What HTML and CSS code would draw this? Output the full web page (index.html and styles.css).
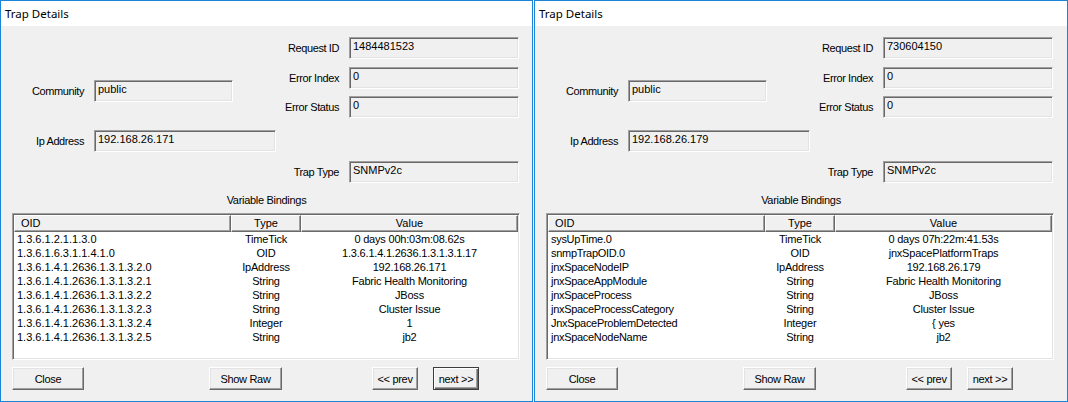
FILE: index.html
```html
<!DOCTYPE html>
<html lang="en">
<head>
    <meta charset="UTF-8">
    <title>Trap Details</title>
    <link rel="stylesheet" href="styles.css">
</head>
<body>
<div class="desktop">

    <!-- first trap window -->
    <div class="window">
        <div class="titlebar">Trap Details</div>
        <div class="content">
            <div class="top">
                <div class="left-col">
                    <div class="field field-community">
                        <label>Community</label>
                        <div class="box box-community">public</div>
                    </div>
                    <div class="field field-ip">
                        <label>Ip Address</label>
                        <div class="box box-ip">192.168.26.171</div>
                    </div>
                </div>
                <div class="right-col">
                    <div class="field">
                        <label>Request ID</label>
                        <div class="box">1484481523</div>
                    </div>
                    <div class="field field-gap8">
                        <label>Error Index</label>
                        <div class="box">0</div>
                    </div>
                    <div class="field field-gap7">
                        <label>Error Status</label>
                        <div class="box">0</div>
                    </div>
                    <div class="field field-traptype">
                        <label>Trap Type</label>
                        <div class="box">SNMPv2c</div>
                    </div>
                </div>
            </div>

            <div class="caption">Variable Bindings</div>

            <div class="bindings">
                <div class="head">
                    <div class="hcell hcell-oid">OID</div>
                    <div class="hcell">Type</div>
                    <div class="hcell">Value</div>
                </div>
                <div class="row"><span class="oid">1.3.6.1.2.1.1.3.0</span><span>TimeTick</span><span>0 days 00h:03m:08.62s</span></div>
                <div class="row"><span class="oid">1.3.6.1.6.3.1.1.4.1.0</span><span>OID</span><span>1.3.6.1.4.1.2636.1.3.1.3.1.17</span></div>
                <div class="row"><span class="oid">1.3.6.1.4.1.2636.1.3.1.3.2.0</span><span>IpAddress</span><span>192.168.26.171</span></div>
                <div class="row"><span class="oid">1.3.6.1.4.1.2636.1.3.1.3.2.1</span><span>String</span><span>Fabric Health Monitoring</span></div>
                <div class="row"><span class="oid">1.3.6.1.4.1.2636.1.3.1.3.2.2</span><span>String</span><span>JBoss</span></div>
                <div class="row"><span class="oid">1.3.6.1.4.1.2636.1.3.1.3.2.3</span><span>String</span><span>Cluster Issue</span></div>
                <div class="row"><span class="oid">1.3.6.1.4.1.2636.1.3.1.3.2.4</span><span>Integer</span><span>1</span></div>
                <div class="row"><span class="oid">1.3.6.1.4.1.2636.1.3.1.3.2.5</span><span>String</span><span>jb2</span></div>
            </div>

            <div class="buttons">
                <button class="btn btn-close">Close</button>
                <button class="btn btn-raw">Show Raw</button>
                <button class="btn btn-small btn-prev">&lt;&lt; prev</button>
                <button class="btn btn-small btn-next default">next &gt;&gt;</button>
            </div>
        </div>
    </div>

    <!-- second trap window -->
    <div class="window window-right">
        <div class="titlebar">Trap Details</div>
        <div class="content">
            <div class="top">
                <div class="left-col">
                    <div class="field field-community">
                        <label>Community</label>
                        <div class="box box-community">public</div>
                    </div>
                    <div class="field field-ip">
                        <label>Ip Address</label>
                        <div class="box box-ip">192.168.26.179</div>
                    </div>
                </div>
                <div class="right-col">
                    <div class="field">
                        <label>Request ID</label>
                        <div class="box">730604150</div>
                    </div>
                    <div class="field field-gap8">
                        <label>Error Index</label>
                        <div class="box">0</div>
                    </div>
                    <div class="field field-gap7">
                        <label>Error Status</label>
                        <div class="box">0</div>
                    </div>
                    <div class="field field-traptype">
                        <label>Trap Type</label>
                        <div class="box">SNMPv2c</div>
                    </div>
                </div>
            </div>

            <div class="caption">Variable Bindings</div>

            <div class="bindings named">
                <div class="head">
                    <div class="hcell hcell-oid">OID</div>
                    <div class="hcell">Type</div>
                    <div class="hcell">Value</div>
                </div>
                <div class="row"><span class="oid">sysUpTime.0</span><span>TimeTick</span><span>0 days 07h:22m:41.53s</span></div>
                <div class="row"><span class="oid">snmpTrapOID.0</span><span>OID</span><span>jnxSpacePlatformTraps</span></div>
                <div class="row"><span class="oid">jnxSpaceNodeIP</span><span>IpAddress</span><span>192.168.26.179</span></div>
                <div class="row"><span class="oid">jnxSpaceAppModule</span><span>String</span><span>Fabric Health Monitoring</span></div>
                <div class="row"><span class="oid">jnxSpaceProcess</span><span>String</span><span>JBoss</span></div>
                <div class="row"><span class="oid">jnxSpaceProcessCategory</span><span>String</span><span>Cluster Issue</span></div>
                <div class="row"><span class="oid">JnxSpaceProblemDetected</span><span>Integer</span><span>{ yes</span></div>
                <div class="row"><span class="oid">jnxSpaceNodeName</span><span>String</span><span>jb2</span></div>
            </div>

            <div class="buttons">
                <button class="btn btn-close">Close</button>
                <button class="btn btn-raw">Show Raw</button>
                <button class="btn btn-small btn-prev">&lt;&lt; prev</button>
                <button class="btn btn-small btn-next">next &gt;&gt;</button>
            </div>
        </div>
    </div>

</div>
</body>
</html>
```

FILE: styles.css
```css
body {
    margin: 0;
    background-color: #fff;
    font-family: "Liberation Sans", Arial, sans-serif;
    font-size: 11px;
    color: #000;
}

.desktop {
    display: flex;
    gap: 1px;
    height: 402px;
}

.window {
    width: 531px;
    height: 400px;
    border: 1px solid #1a84d8;
    display: flex;
    flex-direction: column;
    background-color: #f0f0f0;
}

.window-right {
    width: 532px;
}

.titlebar {
    height: 25px;
    line-height: 25px;
    padding-left: 4px;
    background-color: #fff;
    font-family: "Noto Sans", sans-serif;
    font-size: 11.5px;
}

.content {
    flex: 1;
    display: flex;
    flex-direction: column;
}

/* fields */

.top {
    display: flex;
    height: 157px;
}

.left-col {
    width: 276px;
    padding-top: 54px;
}

.right-col {
    padding-top: 11px;
}

.field {
    display: flex;
    align-items: center;
    height: 22px;
}

.field label {
    width: 62px;
    text-align: right;
    margin-right: 10px;
    letter-spacing: -0.4px;
}

.left-col .field label {
    width: 64px;
    margin-left: 19px;
}

.field-ip {
    margin-top: 28px;
}

.field-gap8 {
    margin-top: 8px;
}

.field-gap7 {
    margin-top: 7px;
}

.field-traptype {
    margin-top: 43px;
}

.box {
    box-sizing: border-box;
    width: 170px;
    height: 22px;
    padding: 2px 3px;
    line-height: 13px;
    background-color: #f0f0f0;
    border: 1px solid;
    border-color: #a0a0a0 #fff #fff #a0a0a0;
    box-shadow: inset 1px 1px 0 #696969, inset -1px -1px 0 #e3e3e3;
}

.box-community {
    width: 139px;
}

.box-ip {
    width: 182px;
}

/* variable bindings table */

.caption {
    margin-top: 11px;
    height: 13px;
    line-height: 13px;
    text-align: center;
    letter-spacing: -0.3px;
}

.bindings {
    box-sizing: border-box;
    margin: 6px 0 0 11px;
    width: 508px;
    height: 147px;
    background-color: #fff;
    border: 1px solid;
    border-color: #a0a0a0 #fff #fff #a0a0a0;
    box-shadow: inset 1px 1px 0 #696969, inset -1px -1px 0 #e3e3e3;
    padding: 1px;
}

.head {
    display: grid;
    grid-template-columns: 217px 70px 217px;
    height: 17px;
}

.hcell {
    box-sizing: border-box;
    background-color: #f0f0f0;
    border-top: 1px solid #fff;
    border-left: 1px solid #fff;
    border-right: 1px solid #696969;
    border-bottom: 1px solid #696969;
    box-shadow: inset -1px -1px 0 #a0a0a0;
    line-height: 15px;
    text-align: center;
}

.hcell-oid {
    text-align: left;
    padding-left: 6px;
}

.row {
    display: grid;
    grid-template-columns: 217px 70px 217px;
    height: 14px;
    line-height: 14px;
    text-align: center;
    white-space: nowrap;
    letter-spacing: -0.2px;
}

.row .oid {
    text-align: left;
    padding-left: 3px;
    letter-spacing: 0;
}

.named .row .oid {
    letter-spacing: -0.3px;
}

/* buttons */

.buttons {
    display: flex;
    margin-top: 7px;
    padding-left: 11px;
}

.btn {
    box-sizing: border-box;
    height: 23px;
    width: 72px;
    padding: 0;
    font-family: "Liberation Sans", Arial, sans-serif;
    font-size: 11px;
    letter-spacing: -0.3px;
    color: #000;
    background-color: #f0f0f0;
    border: 1px solid;
    border-color: #fff #696969 #696969 #fff;
    box-shadow: inset -1px -1px 0 #a0a0a0, inset 1px 1px 0 #e3e3e3;
}

.btn-raw {
    width: 73px;
    margin-left: 125px;
}

.btn-small {
    width: 46px;
}

.btn-prev {
    margin-left: 90px;
}

.btn-next {
    margin-left: 15px;
}

.btn.default {
    border: 1px solid #3c3c3c;
    box-shadow: inset 1px 1px 0 #fff, inset -1px -1px 0 #696969, inset -2px -2px 0 #a0a0a0;
}
```
